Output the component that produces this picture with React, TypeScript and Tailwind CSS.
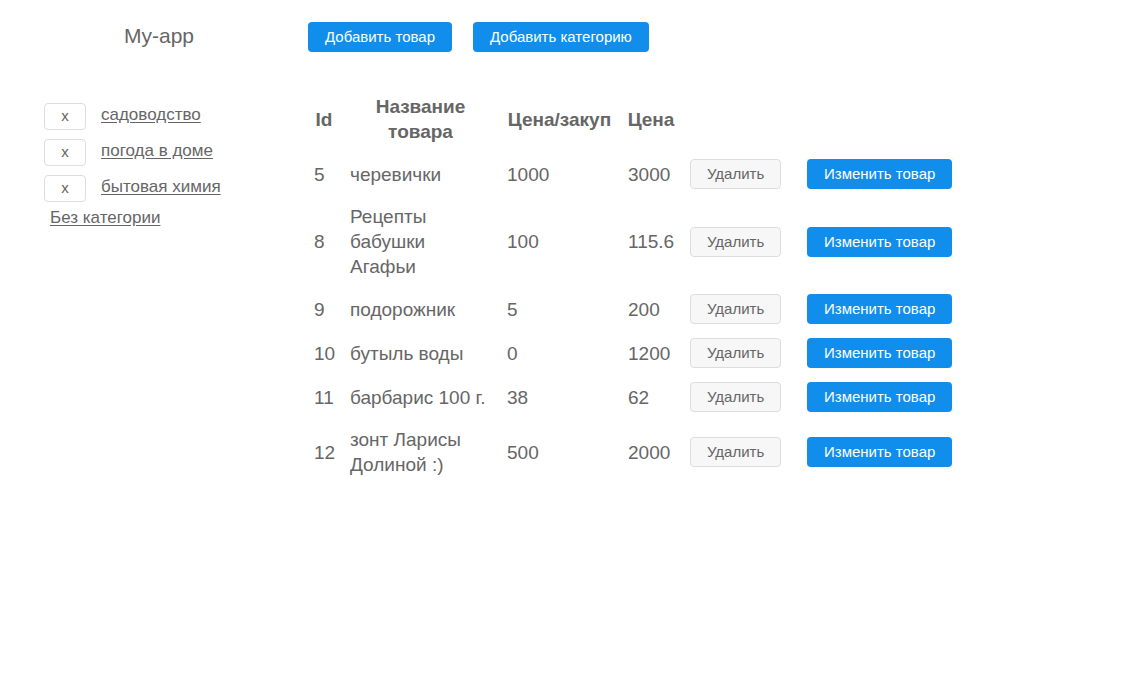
import React from "react";

interface Product {
  id: number;
  name: string;
  purchasePrice: string;
  price: string;
}

const categories: string[] = ["садоводство", "погода в доме", "бытовая химия"];

const products: Product[] = [
  { id: 5, name: "черевички", purchasePrice: "1000", price: "3000" },
  { id: 8, name: "Рецепты бабушки Агафьи", purchasePrice: "100", price: "115.6" },
  { id: 9, name: "подорожник", purchasePrice: "5", price: "200" },
  { id: 10, name: "бутыль воды", purchasePrice: "0", price: "1200" },
  { id: 11, name: "барбарис 100 г.", purchasePrice: "38", price: "62" },
  { id: 12, name: "зонт Ларисы Долиной :)", purchasePrice: "500", price: "2000" },
];

function PrimaryButton({ children }: { children: React.ReactNode }) {
  return (
    <button
      type="button"
      className="h-[30px] cursor-pointer rounded bg-[#118eeb] px-[17px] text-[15px] leading-5 whitespace-nowrap text-white hover:bg-[#0f80d4]"
    >
      {children}
    </button>
  );
}

function Sidebar() {
  return (
    <nav className="pl-11 text-[17px] leading-6">
      <ul className="flex flex-col gap-[9px]">
        {categories.map((category) => (
          <li key={category} className="flex h-[27px] items-start">
            <button
              type="button"
              aria-label={`x ${category}`}
              className="h-[27px] w-[42px] cursor-pointer rounded border border-[#dddddd] bg-white pb-0.5 text-[15px] leading-5 hover:bg-[#f7f7f7]"
            >
              x
            </button>
            <a href="#" className="ml-[15px] underline underline-offset-2">
              {category}
            </a>
          </li>
        ))}
      </ul>
      <a href="#" className="mt-1 ml-1.5 inline-block underline underline-offset-2">
        Без категории
      </a>
    </nav>
  );
}

function ProductTable() {
  return (
    <table className="w-[652px] table-fixed text-[19px] leading-[25px]">
      <colgroup>
        <col className="w-9" />
        <col className="w-[157px]" />
        <col className="w-[121px]" />
        <col className="w-[62px]" />
        <col className="w-[117px]" />
        <col className="w-[159px]" />
      </colgroup>
      <thead>
        <tr>
          <th className="py-2">Id</th>
          <th className="p-2">Название товара</th>
          <th className="py-2">Цена/закуп</th>
          <th className="py-2">Цена</th>
          <td />
          <td />
        </tr>
      </thead>
      <tbody>
        {products.map((product) => (
          <tr key={product.id}>
            <td className="py-2 pl-2">{product.id}</td>
            <td className="py-2 pr-3 pl-2">{product.name}</td>
            <td className="p-2">{product.purchasePrice}</td>
            <td className="py-2 pl-2">{product.price}</td>
            <td className="px-2 py-[7px]">
              <button
                type="button"
                className="block h-[30px] cursor-pointer rounded border border-[#dddddd] bg-[#f7f7f7] px-4 text-[15px] leading-5 hover:bg-[#eeeeee]"
              >
                Удалить
              </button>
            </td>
            <td className="px-2 py-[7px]">
              <div className="flex">
                <PrimaryButton>Изменить товар</PrimaryButton>
              </div>
            </td>
          </tr>
        ))}
      </tbody>
    </table>
  );
}

export default function App() {
  return (
    <div className="grid min-h-screen grid-cols-[306px_1fr] content-start bg-white font-['Liberation_Sans',Arial,sans-serif] text-[#666666]">
      <h1 className="pt-[22px] pl-3 text-center text-[21px] leading-7">My-app</h1>
      <div className="flex gap-[21px] pt-[22px] pl-0.5">
        <PrimaryButton>Добавить товар</PrimaryButton>
        <PrimaryButton>Добавить категорию</PrimaryButton>
      </div>
      <div className="pt-[51px]">
        <Sidebar />
      </div>
      <main className="pt-[34px]">
        <ProductTable />
      </main>
    </div>
  );
}
